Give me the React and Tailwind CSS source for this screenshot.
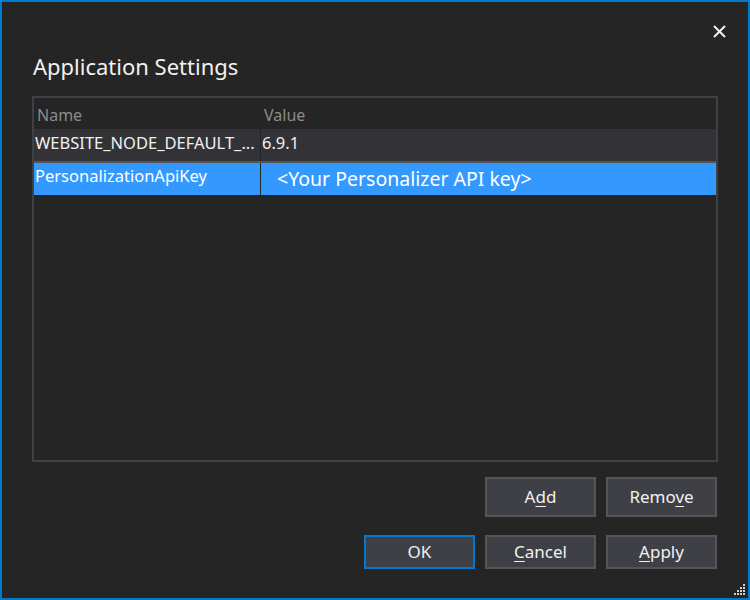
export default function App() {
  const font = { fontFamily: '"Noto Sans", "Open Sans", sans-serif' }
  return (
    <div
      className="relative flex h-[600px] w-[750px] flex-col border-2 border-[#007acc] bg-[#252526] text-[#f1f1f1]"
      style={font}
    >
      <div className="flex h-[49px] justify-end pr-[20px] pt-[20px]">
        <svg width="16" height="16" viewBox="0 0 16 16" className="mt-[2px]">
          <path d="M2 2 L13 13 M13 2 L2 13" stroke="#f1f1f1" strokeWidth="2" />
        </svg>
      </div>
      <h1 className="ml-[31px] text-[22px] leading-[30px]">Application Settings</h1>

      <div className="ml-[30px] mt-[15px] h-[366px] w-[686px] border-2 border-[#3f3f46]">
        <div className="flex h-[31px] items-center pt-[3px] text-[16px] text-[#8c8c8c]">
          <div className="w-[228px] pl-[3px]">Name</div>
          <div className="pl-[2px]">Value</div>
        </div>
        <div className="flex h-[32px] items-center bg-[#333337] pb-[3px] text-[16.5px]">
          <div className="w-[226px] truncate pl-[1px]">WEBSITE_NODE_DEFAULT_...</div>
          <div className="h-[32px] w-px self-start bg-[#252526]" />
          <div className="pl-[1px]">6.9.1</div>
        </div>
        <div className="h-[2px] bg-[#555558]" />
        <div className="flex h-[32px] bg-[#3399ff] text-[16.5px] text-white">
          <div className="w-[226px] pl-[1px] pt-[1px]">PersonalizationApiKey</div>
          <div className="h-full w-px bg-[#252526]" />
          <div className="pl-[16px] pt-[3px] text-[19.5px] leading-[26px]">&lt;Your Personalizer API key&gt;</div>
        </div>
      </div>

      <div className="mr-[31px] mt-[15px] flex justify-end gap-[10px] text-[17px]">
        <button className="h-[40px] w-[111px] border-2 border-[#555558] bg-[#3f3f46]">
          A<span className="underline underline-offset-[3px]">d</span>d
        </button>
        <button className="h-[40px] w-[111px] border-2 border-[#555558] bg-[#3f3f46]">
          Remo<span className="underline underline-offset-[3px]">v</span>e
        </button>
      </div>
      <div className="mr-[31px] mt-[18px] flex justify-end gap-[10px] text-[17px]">
        <button className="h-[34px] w-[111px] border-2 border-[#007acc] bg-[#3f3f46]">OK</button>
        <button className="h-[34px] w-[111px] border-2 border-[#555558] bg-[#3f3f46]">
          <span className="underline underline-offset-[3px]">C</span>ancel
        </button>
        <button className="h-[34px] w-[111px] border-2 border-[#555558] bg-[#3f3f46]">
          <span className="underline underline-offset-[3px]">A</span>pply
        </button>
      </div>

      <svg width="12" height="12" viewBox="0 0 12 12" className="absolute bottom-[2px] right-[2px]">
        <g fill="#cfcfcf">
          <rect x="9" y="0" width="2" height="2" />
          <rect x="6" y="3" width="2" height="2" />
          <rect x="9" y="3" width="2" height="2" />
          <rect x="3" y="6" width="2" height="2" />
          <rect x="6" y="6" width="2" height="2" />
          <rect x="9" y="6" width="2" height="2" />
          <rect x="0" y="9" width="2" height="2" />
          <rect x="3" y="9" width="2" height="2" />
          <rect x="6" y="9" width="2" height="2" />
          <rect x="9" y="9" width="2" height="2" />
        </g>
      </svg>
    </div>
  )
}
